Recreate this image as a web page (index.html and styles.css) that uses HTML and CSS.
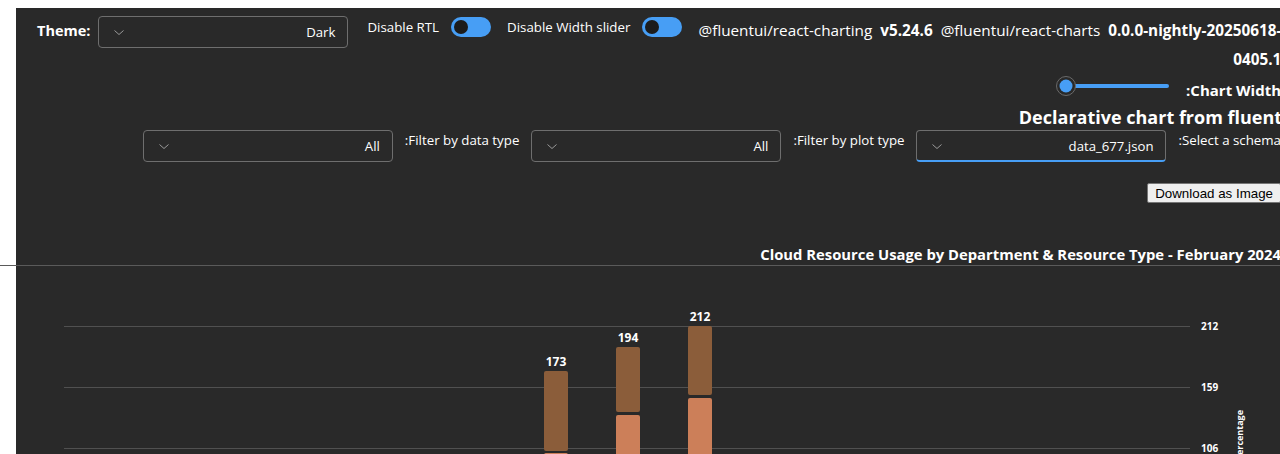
FILE: index.html
```html
<!DOCTYPE html>
<html>
<head>
<meta charset="utf-8">
<link rel="stylesheet" href="styles.css">
</head>
<body>
<div class="panel top">
  <div class="toprow">
    <div class="theme">
      <span class="theme-label">Theme:</span>
      <div class="dropdown">
        <span class="dd-value">Dark</span>
        <svg class="chev" width="12" height="12" viewBox="0 0 12 12"><path d="M1.5 4.5 L6 8.5 L10.5 4.5" fill="none" stroke="#9a9a9a" stroke-width="1"/></svg>
      </div>
    </div>
    <div class="toggle-group first">
      <span>Disable RTL</span>
      <span class="toggle"><span class="knob"></span></span>
    </div>
    <div class="toggle-group">
      <span>Disable Width slider</span>
      <span class="toggle"><span class="knob"></span></span>
    </div>
    <div class="packages">@fluentui/react-charting&nbsp; <b>v5.24.6</b>&nbsp; @fluentui/react-charts&nbsp; <b>0.0.0-nightly-20250618-<br>0405.1</b></div>
  </div>
  <div class="rtl">
    <div class="width-row">
      <span class="width-label">Chart Width:</span>
      <svg class="slider" width="114" height="20" viewBox="0 0 114 20">
        <rect x="10" y="8" width="103" height="4" rx="2" fill="#479ef5"/>
        <circle cx="10" cy="10" r="9.5" fill="#292929" stroke="#6b6b6b" stroke-width="1"/>
        <circle cx="10" cy="10" r="6.5" fill="#479ef5"/>
      </svg>
    </div>
    <h1 class="heading">Declarative chart from fluent schema</h1>
    <div class="filter-row">
      <span class="filter-label">Select a schema:</span>
      <div class="dropdown focused">
        <span class="dd-value">data_677.json</span>
        <svg class="chev" width="12" height="12" viewBox="0 0 12 12"><path d="M1.5 4.5 L6 8.5 L10.5 4.5" fill="none" stroke="#9a9a9a" stroke-width="1"/></svg>
      </div>
      <span class="filter-label">Filter by plot type:</span>
      <div class="dropdown">
        <span class="dd-value">All</span>
        <svg class="chev" width="12" height="12" viewBox="0 0 12 12"><path d="M1.5 4.5 L6 8.5 L10.5 4.5" fill="none" stroke="#9a9a9a" stroke-width="1"/></svg>
      </div>
      <span class="filter-label">Filter by data type:</span>
      <div class="dropdown">
        <span class="dd-value">All</span>
        <svg class="chev" width="12" height="12" viewBox="0 0 12 12"><path d="M1.5 4.5 L6 8.5 L10.5 4.5" fill="none" stroke="#9a9a9a" stroke-width="1"/></svg>
      </div>
    </div>
    <div class="btn-row"><button class="download">Download as Image</button></div>
    <div class="chart-title">Cloud Resource Usage by Department &amp; Resource Type - February 2024</div>
  </div>
</div>
<div class="divider"></div>
<div class="panel bottom">
  <svg class="chart" width="1264" height="188" viewBox="0 0 1264 188">
    <g stroke="#505050" stroke-width="1">
      <line x1="48" x2="1174" y1="60.5" y2="60.5"/>
      <line x1="48" x2="1174" y1="121.5" y2="121.5"/>
      <line x1="48" x2="1174" y1="182.5" y2="182.5"/>
    </g>
    <g class="axis-label">
      <text x="1185" y="60" dominant-baseline="central">212</text>
      <text x="1185" y="121" dominant-baseline="central">159</text>
      <text x="1185" y="182" dominant-baseline="central">106</text>
    </g>
    <rect x="528" y="105" width="24" height="80" rx="2" fill="#8b5d3a"/>
    <rect x="528" y="187" width="24" height="10" rx="2" fill="#cc7f59"/>
    <rect x="600" y="81" width="24" height="65" rx="2" fill="#8b5d3a"/>
    <rect x="600" y="149" width="24" height="50" rx="2" fill="#cc7f59"/>
    <rect x="672" y="60" width="24" height="69" rx="2" fill="#8b5d3a"/>
    <rect x="672" y="132" width="24" height="70" rx="2" fill="#cc7f59"/>
    <g class="bar-label">
      <text x="540" y="95" dominant-baseline="central" text-anchor="middle">173</text>
      <text x="612" y="71" dominant-baseline="central" text-anchor="middle">194</text>
      <text x="684" y="50" dominant-baseline="central" text-anchor="middle">212</text>
    </g>
    <text class="y-title" transform="translate(1227,144) rotate(-90)" text-anchor="end">Percentage</text>
  </svg>
</div>
</body>
</html>
```
FILE: styles.css
```css
html, body {
  margin: 0;
  padding: 0;
  background: #ffffff;
  overflow: hidden;
  font-family: "Open Sans", "Noto Sans", sans-serif;
}

.panel {
  margin-left: 16px;
  width: 1265px;
  background: #292929;
  color: #ffffff;
}

.top {
  margin-top: 8px;
  padding-bottom: 1px;
}

.toprow {
  display: flex;
  align-items: flex-start;
  padding: 8px 0 0 21px;
}

.theme {
  display: flex;
  align-items: center;
  gap: 8px;
}

.theme-label {
  font-weight: 700;
  font-size: 14.5px;
  margin-top: -3px;
}

.dropdown {
  direction: rtl;
  width: 250px;
  height: 32px;
  box-sizing: border-box;
  border: 1px solid #6e6e6e;
  border-radius: 4px;
  display: flex;
  align-items: center;
  justify-content: space-between;
  padding: 0 12px 0 14px;
  font-size: 13.2px;
  color: #ffffff;
  flex: none;
}

.dropdown.focused {
  border-bottom: 2px solid #479ef5;
  padding-top: 1px;
}

.chev {
  display: block;
}

.toggle-group {
  display: flex;
  align-items: center;
  gap: 12px;
  margin-left: 16px;
  margin-top: 1px;
  font-size: 13.3px;
  white-space: nowrap;
}

.toggle-group span:first-child {
  margin-top: -1px;
}

.toggle-group.first {
  margin-left: 19px;
}

.toggle {
  width: 40px;
  height: 20px;
  box-sizing: border-box;
  border-radius: 10px;
  background: #479ef5;
  display: flex;
  align-items: center;
  padding: 0 3px;
}

.knob {
  width: 14px;
  height: 14px;
  border-radius: 50%;
  background: #1c1c1c;
}

.packages {
  flex: 1;
  margin-left: 16px;
  text-align: right;
  line-height: 29px;
  font-size: 15.3px;
  white-space: nowrap;
  height: 58px;
}

.rtl {
  direction: rtl;
}

.width-row {
  display: flex;
  align-items: flex-start;
  gap: 16px;
  margin-top: 2px;
}

.width-label {
  font-weight: 700;
  font-size: 15px;
  line-height: 20px;
  margin-top: 4px;
}

.slider {
  display: block;
}

.heading {
  margin: 4px -75px 0 0;
  font-size: 18px;
  font-weight: 700;
  line-height: 26px;
  white-space: nowrap;
}

.filter-row {
  display: flex;
  align-items: flex-start;
  gap: 12px;
}

.filter-label {
  font-size: 13.3px;
  line-height: 20px;
  white-space: nowrap;
}

.btn-row {
  display: flex;
  margin-top: 21px;
  height: 21px;
}

.download {
  font-family: "Liberation Sans", Arial, sans-serif;
  font-size: 13.333px;
  height: 20px;
  padding: 1px 7px;
  border: 1px solid #767676;
  border-radius: 2px;
  background: #efefef;
  color: #000000;
}

.chart-title {
  margin-top: 40px;
  font-size: 14.8px;
  font-weight: 700;
  line-height: 20px;
  white-space: nowrap;
}

.divider {
  height: 1px;
  background: #5a5a5a;
}

.bottom {
  height: 188px;
}

.chart {
  display: block;
}

.axis-label text {
  font-family: "Open Sans", sans-serif;
  font-size: 10px;
  font-weight: 700;
  fill: #ffffff;
}

.bar-label text {
  font-family: "Open Sans", sans-serif;
  font-size: 12px;
  font-weight: 700;
  fill: #ffffff;
}

.y-title {
  font-family: "Open Sans", sans-serif;
  font-size: 9px;
  font-weight: 700;
  fill: #ffffff;
}
```
